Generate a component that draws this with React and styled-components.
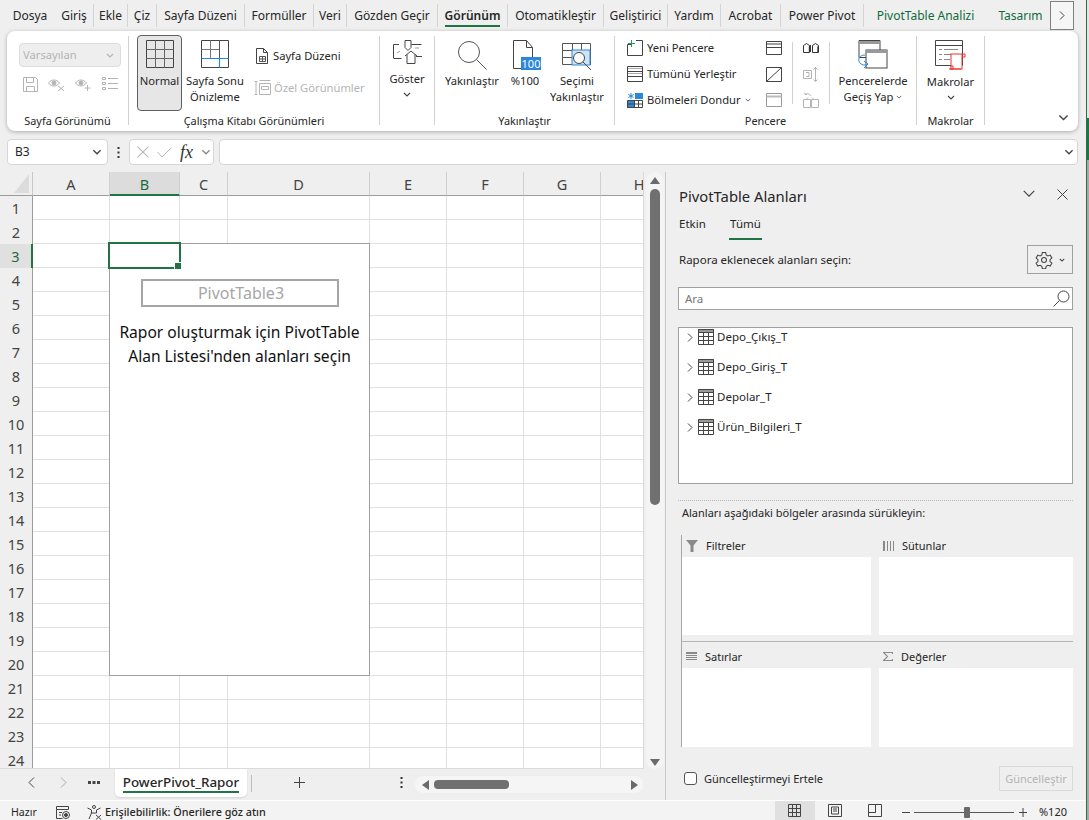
import React from 'react'
import styled, { createGlobalStyle } from 'styled-components'

const GlobalStyle = createGlobalStyle`
    html, body { margin: 0; padding: 0; background: #efefef; }
    * { box-sizing: border-box; }
    #root { width: 1089px; height: 820px; overflow: hidden; }
    svg { display: block; flex-shrink: 0; }
`

const GREEN = '#217346'
const DARK = '#444'
const MUTED = '#b4b4b4'

const Shell = styled.div`
    width: 1089px;
    height: 820px;
    display: flex;
    background: #efefef;
    color: #262626;
    font-family: "Noto Sans", "Open Sans", sans-serif;
    font-size: 12px;
    line-height: 16px;
    overflow: hidden;
`
const Content = styled.div`
    width: 1086px;
    display: flex;
    flex-direction: column;
`
const EdgeStrip = styled.div`
    width: 3px;
    border-left: 1px solid ${GREEN};
    background: linear-gradient(#e4e4e4 118px, ${GREEN} 118px, ${GREEN} 160px, #a9a9a9 160px);
`

/* ---- ust sekmeler ---- */
const TabBar = styled.div`
    height: 31px;
    padding: 4px 0 0 6px;
    display: flex;
    position: relative;
`
const Tab = styled.div`
    width: ${p => p.$w}px;
    height: 23px;
    flex-shrink: 0;
    display: flex;
    justify-content: center;
    line-height: 23px;
    white-space: nowrap;
    color: ${p => (p.$ctx ? '#0f6b3c' : '#262626')};
    font-weight: ${p => (p.$active ? 600 : 400)};
    border-right: 1px solid ${p => (p.$sep ? '#d4d4d4' : 'transparent')};
    & span {
        height: 23px;
        border-bottom: 2px solid ${p => (p.$active ? GREEN : 'transparent')};
    }
`
const TabMore = styled.div`
    position: absolute;
    left: 1050px;
    top: 1px;
    width: 24px;
    height: 29px;
    border: 1px solid #808080;
    background: #f6f6f6;
    display: flex;
    align-items: center;
    justify-content: center;
`

/* ---- serit ---- */
const Ribbon = styled.div`
    height: 100px;
    width: 1071px;
    margin-left: 7px;
    padding-top: 5px;
    background: #fff;
    border-radius: 8px;
    box-shadow: 0 1px 4px rgba(0, 0, 0, 0.28);
    display: flex;
    font-size: 11.2px;
`
const Group = styled.div`
    width: ${p => p.$w}px;
    height: 89px;
    flex-shrink: 0;
    border-right: 1px solid #d2d2d2;
    display: flex;
    flex-direction: column;
`
const GroupBody = styled.div`
    height: 75px;
    display: flex;
    padding-left: ${p => p.$pad || 0}px;
`
const GroupLabel = styled.div`
    height: 14px;
    line-height: 20px;
    font-size: 10.9px;
    text-align: center;
    white-space: nowrap;
`
const Collapse = styled.div`
    margin: 78px 0 0 auto;
    padding-right: 9px;
`
const LargeBtn = styled.div`
    width: ${p => p.$w}px;
    height: 76px;
    flex-shrink: 0;
    margin-top: -1px;
    margin-left: ${p => p.$ml || 0}px;
    padding-top: 4px;
    display: flex;
    flex-direction: column;
    align-items: center;
    text-align: center;
    white-space: nowrap;
    border-radius: 4px;
    background: ${p => (p.$on ? '#e6e6e6' : 'transparent')};
    border: 1px solid ${p => (p.$on ? '#606060' : 'transparent')};
`
const IconSlot = styled.div`
    height: ${p => p.$h || 33}px;
    padding-top: ${p => p.$top || 0}px;
    margin-top: ${p => p.$mt || 0}px;
    flex-shrink: 0;
`
const SmallCol = styled.div`
    width: ${p => p.$w}px;
    flex-shrink: 0;
    margin-left: ${p => p.$ml || 0}px;
    padding-top: ${p => p.$top || 0}px;
    display: flex;
    flex-direction: column;
    gap: ${p => p.$gap || 4.5}px;
`
const SmallBtn = styled.div`
    height: ${p => p.$h || 22}px;
    display: flex;
    align-items: center;
    gap: ${p => p.$gap || 4}px;
    white-space: nowrap;
    color: ${p => (p.$off ? MUTED : '#262626')};
`
const VSep = styled.div`
    width: 1px;
    height: 62px;
    margin: 6px 0 0 10px;
    background: #d2d2d2;
    flex-shrink: 0;
`
const ViewSelect = styled.div`
    width: 102px;
    height: 24px;
    margin-top: 7px;
    padding: 0 6px 0 3px;
    background: #eeeeee;
    border: 1px solid #dddddd;
    border-radius: 4px;
    color: ${MUTED};
    display: flex;
    align-items: center;
    justify-content: space-between;
`
const ViewIcons = styled.div`
    display: flex;
    gap: 10px;
    margin: 10px 0 0 4px;
`

/* ---- formul cubugu ---- */
const FormulaBar = styled.div`
    height: 26px;
    margin: 8px 8px 7px 7px;
    display: flex;
    flex-shrink: 0;
`
const FieldBox = styled.div`
    width: ${p => (p.$w ? `${p.$w}px` : 'auto')};
    flex: ${p => (p.$w ? '0 0 auto' : '1')};
    margin-left: ${p => p.$ml || 0}px;
    background: #fff;
    border: 1px solid #d6d6d6;
    border-radius: 4px;
    display: flex;
    align-items: center;
    justify-content: space-between;
    padding: ${p => p.$pad || '0 5px 0 7px'};
`
const Dots = styled.div`
    width: 21px;
    display: flex;
    align-items: center;
    justify-content: center;
`
const FxText = styled.span`
    font-family: "Liberation Serif", serif;
    font-style: italic;
    font-size: 18px;
    color: #333;
`

/* ---- ana alan ---- */
const Main = styled.div`
    height: 628px;
    display: flex;
    flex-shrink: 0;
`
const SheetSide = styled.div`
    width: 665px;
    flex-shrink: 0;
    display: flex;
    flex-direction: column;
`
const SheetTop = styled.div`
    height: 597px;
    display: flex;
    overflow: hidden;
`
const Sheet = styled.div`
    width: 644px;
    height: 597px;
    background: #fff;
    position: relative;
    overflow: hidden;
    flex-shrink: 0;
    display: grid;
    grid-template-columns: 33px 77px 70px 48px 142px 77px 77px 77px 77px;
    grid-auto-rows: 24px;
    border-bottom: 1px solid #dadada;
    border-right: 1px solid #dadada;
`
const Corner = styled.div`
    background: #efefef;
    border-right: 1px solid #c8c8c8;
    border-bottom: 1px solid #9c9c9c;
    position: relative;
    &::after {
        content: '';
        position: absolute;
        right: 3px;
        bottom: 2px;
        border-style: solid;
        border-width: 0 0 19px 15px;
        border-color: transparent transparent #dcdcdc transparent;
    }
`
const ColHead = styled.div`
    background: ${p => (p.$on ? '#dcdcdc' : '#efefef')};
    color: ${p => (p.$on ? '#1d6b41' : '#444')};
    border-right: 1px solid #d0d0d0;
    border-bottom: ${p => (p.$on ? `2px solid ${GREEN}` : '1px solid #9c9c9c')};
    font-size: 14.5px;
    text-align: center;
    line-height: 24px;
`
const RowHead = styled.div`
    background: ${p => (p.$on ? '#e0e0e0' : '#efefef')};
    color: ${p => (p.$on ? '#1d6b41' : '#444')};
    border-right: ${p => (p.$on ? `2px solid ${GREEN}` : '1px solid #9c9c9c')};
    font-size: 14.5px;
    text-align: center;
    line-height: 25px;
`
const Cell = styled.div`
    border-right: 1px solid #e1e1e1;
    border-bottom: 1px solid #e1e1e1;
`
const PivotBox = styled.div`
    position: absolute;
    left: 109px;
    top: 71px;
    width: 261px;
    height: 433px;
    background: #fff;
    border: 1px solid #a0a0a0;
    display: flex;
    flex-direction: column;
    align-items: center;
    padding-top: 35px;
`
const PivotTitle = styled.div`
    width: 198px;
    height: 28px;
    padding-left: 3px;
    border: 2px solid #a6a6a6;
    color: #a6a6a6;
    font-size: 16px;
    line-height: 24px;
    text-align: center;
`
const PivotText = styled.div`
    margin-top: 13px;
    color: #111;
    font-size: 15.6px;
    line-height: 24px;
    text-align: center;
    white-space: nowrap;
`
const Selection = styled.div`
    position: absolute;
    left: 108px;
    top: 70px;
    width: 73px;
    height: 27px;
    border: 2px solid ${GREEN};
    &::after {
        content: '';
        position: absolute;
        right: -3px;
        bottom: -3px;
        width: 6px;
        height: 6px;
        background: ${GREEN};
        border: 1px solid #fff;
    }
`
const VScroll = styled.div`
    width: 18px;
    margin: 0 0 0 2px;
    background: #f4f4f4;
    border-radius: 9px;
    display: flex;
    flex-direction: column;
    align-items: center;
    padding-top: 5px;
    padding-bottom: 3px;
    justify-content: space-between;
    flex-shrink: 0;
`
const VThumb = styled.div`
    width: 10px;
    height: 316px;
    margin-top: 5px;
    margin-bottom: auto;
    background: #707070;
    border-radius: 5px;
`
const SheetBar = styled.div`
    flex: 1;
    display: flex;
    align-items: flex-start;
    position: relative;
`
const NavBtn = styled.div`
    width: ${p => p.$w}px;
    margin-left: ${p => p.$ml || 0}px;
    height: 27px;
    flex-shrink: 0;
    display: flex;
    align-items: center;
    justify-content: center;
`
const SheetTab = styled.div`
    width: 132px;
    height: 28px;
    margin-left: ${p => p.$ml}px;
    flex-shrink: 0;
    background: #fff;
    border-radius: 0 0 5px 5px;
    box-shadow: 0 1px 2px rgba(0, 0, 0, 0.12);
    font-size: 13.4px;
    font-weight: 500;
    text-align: center;
    line-height: 26px;
    & span {
        display: inline-block;
        height: 24px;
        border-bottom: 2px solid ${GREEN};
    }
`
const TabSep = styled.div`
    width: 1px;
    height: 17px;
    margin: 6px 0 0 4px;
    background: #bdbdbd;
    flex-shrink: 0;
`
const HScroll = styled.div`
    width: 228px;
    height: 17px;
    margin: 7px 0 0 10px;
    flex-shrink: 0;
    background: #f5f5f5;
    border-radius: 8px;
    display: flex;
    align-items: center;
    padding: 0 5px 0 7px;
    gap: 5px;
`
const HThumb = styled.div`
    width: 75px;
    height: 9px;
    background: #707070;
    border-radius: 4px;
    margin-right: auto;
`

/* ---- pivot bolmesi ---- */
const Panel = styled.div`
    flex: 1;
    border-left: 1px solid #c8c8c8;
    padding: 0 14px 0 12px;
    display: flex;
    flex-direction: column;
    position: relative;
`
const PanelHead = styled.div`
    height: 45px;
    padding: 13px 0 0 1px;
    display: flex;
    justify-content: space-between;
`
const PanelTitle = styled.div`
    font-size: 14.8px;
    line-height: 22px;
`
const PanelActions = styled.div`
    display: flex;
    gap: 21px;
    padding: 4px 5px 0 0;
`
const PanelTabs = styled.div`
    display: flex;
    gap: 24px;
    padding-left: 1px;
    height: 23px;
    line-height: 14px;
    font-size: 11.5px;
`
const PanelTab = styled.div`
    height: 23px;
    width: ${p => p.$w}px;
    border-bottom: 2px solid ${p => (p.$on ? GREEN : 'transparent')};
    text-align: ${p => (p.$on ? 'center' : 'left')};
`
const ChooseRow = styled.div`
    height: 29px;
    margin-top: 5px;
    display: flex;
    justify-content: space-between;
    align-items: center;
    font-size: 11.5px;
    padding-left: 1px;
`
const GearBtn = styled.div`
    width: 46px;
    height: 29px;
    border: 1px solid #a0a0a0;
    display: flex;
    align-items: center;
    justify-content: center;
    gap: 6px;
`
const SearchBox = styled.div`
    height: 23px;
    margin-top: 13px;
    background: #fff;
    border: 1px solid #a0a0a0;
    padding: 0 2px 0 6px;
    display: flex;
    align-items: center;
    justify-content: space-between;
    color: #777;
    font-size: 11.5px;
`
const FieldList = styled.div`
    height: 157px;
    margin-top: 17px;
    background: #fff;
    border: 1px solid #a0a0a0;
    padding: 0 0 0 8px;
    display: flex;
    flex-direction: column;
`
const FieldRow = styled.div`
    height: 30px;
    flex-shrink: 0;
    margin-top: ${p => (p.$first ? '-6px' : '0')};
    display: flex;
    align-items: center;
    gap: 3px;
    font-size: 11.5px;
    & > svg:first-child { margin-right: 2px; }
`
const DotLine = styled.div`
    height: 1px;
    margin-top: 16px;
    border-top: 1px dotted #b8b8b8;
`
const DragHint = styled.div`
    margin: 0 0 0 4px;
    height: 24px;
    line-height: 24px;
    font-size: 11px;
`
const AreaGrid = styled.div`
    display: grid;
    grid-template-columns: 189px 194px;
    column-gap: 8px;
    margin: 10px 0 0 3px;
    border-left: 1px solid #a8a8a8;
    width: 392px;
`
const Area = styled.div`
    display: flex;
    flex-direction: column;
`
const AreaHead = styled.div`
    height: ${p => p.$h}px;
    display: flex;
    align-items: center;
    gap: 8px;
    padding-left: 4px;
    font-size: 11px;
`
const AreaBody = styled.div`
    height: ${p => p.$h}px;
    background: #fff;
`
const AreaDivider = styled.div`
    grid-column: 1 / 3;
    height: 1px;
    margin: 6px 0 3px;
    background: #b4b4b4;
`
const PanelFoot = styled.div`
    margin: 19px 0 0 6px;
    width: 389px;
    height: 25px;
    display: flex;
    align-items: center;
    font-size: 11px;
`
const Check = styled.div`
    width: 13px;
    height: 13px;
    border: 1px solid #555;
    border-radius: 3px;
    background: #fff;
    margin-right: 7px;
`
const UpdateBtn = styled.div`
    margin-left: auto;
    width: 74px;
    height: 25px;
    border: 1px solid #dadada;
    color: ${MUTED};
    font-size: 11px;
    line-height: 23px;
    text-align: center;
`

/* ---- durum cubugu ---- */
const StatusBar = styled.div`
    height: 20px;
    width: 1089px;
    flex-shrink: 0;
    background: #f3f3f3;
    border-top: 1px solid #fff;
    display: flex;
    align-items: center;
    font-size: 10.6px;
    padding: 3px 0 0 11px;
`
const StatusStrong = styled.span`
    font-weight: 500;
    font-size: 10.8px;
    margin-left: 4px;
    white-space: nowrap;
`
const StatusGap = styled.div`
    width: ${p => p.$w}px;
    flex-shrink: 0;
`
const StatusFill = styled.div`
    flex: 1;
`
const ViewBtn = styled.div`
    width: 40px;
    height: 19px;
    margin-top: -3px;
    display: flex;
    align-items: center;
    justify-content: center;
    background: ${p => (p.$on ? '#e0e0e0' : 'transparent')};
`
const ZoomPct = styled.span`
    margin: 0 22px 0 12px;
    font-size: 11px;
`
const ZoomTrack = styled.div`
    width: 100px;
    height: 1px;
    background: #555;
    margin: 0 5px 0 4px;
    position: relative;
    &::after {
        content: '';
        position: absolute;
        left: 50px;
        top: -5px;
        width: 6px;
        height: 11px;
        border-radius: 1px;
        background: #6a6a6a;
    }
`

/* ---- ikonlar ---- */
const Ico = ({ w, h, children, ...rest }) => (
    <svg width={w} height={h} viewBox={`0 0 ${w} ${h}`} fill="none" stroke={DARK} strokeWidth="1" {...rest}>{children}</svg>
)

const Chev = ({ w = 8, h = 5, c = DARK, sw = 1.1 }) => (
    <svg width={w} height={h} viewBox="0 0 8 5" fill="none" stroke={c} strokeWidth={sw}><path d="M1 1l3 3 3-3" /></svg>
)

const GridIcon = () => (
    <Ico w={28} h={28}>
        <path d="M.5.5h27v27H.5z" />
        <path d="M.5 9.5h27M.5 18.5h27M9.5.5v27M18.5.5v27" stroke="#666" />
    </Ico>
)
const BreakIcon = () => (
    <Ico w={28} h={28}>
        <path d="M.5.5h27v27H.5z" />
        <path d="M.5 9.5h18M9.5.5v18" stroke="#777" />
        <path d="M18.5.5v18" stroke="#555" />
        <path d="M.5 18.5h27M18.5 18.5v9" stroke="#1e8bd6" strokeWidth="1.2" />
    </Ico>
)
const PageIcon = () => (
    <Ico w={16} h={16}>
        <path d="M2.5.5h7l4 4v11h-11z" />
        <path d="M9.5.5v4h4" />
        <path d="M5.5 8.5h6v5h-6zM8.5 8.5v5M5.5 11h6" stroke="#555" />
    </Ico>
)
const CustomIcon = () => (
    <Ico w={18} h={16} stroke={MUTED}>
        <path d="M.5 1.5h3M2 1.5v13M.5 14.5h3M5.5 3.5h11v11h-11z" />
        <path d="M5.5.5h11M7.5 6.5h7v3h-7z" />
    </Ico>
)
const SaveIcon = () => (
    <Ico w={15} h={15} stroke={MUTED}>
        <path d="M.5.5h12l2 2v12H.5z" />
        <path d="M3.5.5v5h7v-5M3.5 14.5v-5h8v5" />
    </Ico>
)
const EyeIcon = ({ plus }) => (
    <Ico w={17} h={15} stroke={MUTED}>
        <path d="M.5 6c3-4 8-4 11 0-3 4-8 4-11 0z" />
        <circle cx="6" cy="6" r="2" fill={MUTED} />
        {plus
            ? <path d="M12.5 8v6M9.5 11h6" />
            : <path d="M10 9l6 5M16 9l-6 5" />}
    </Ico>
)
const ListIcon = () => (
    <Ico w={16} h={13} stroke={MUTED}>
        <path d="M.5.5h3v2h-3zM.5 5.5h3v2h-3zM.5 10.5h3v2h-3zM6 1.5h10M6 6.5h10M6 11.5h10" />
    </Ico>
)
const ShowIcon = () => (
    <Ico w={29} h={25}>
        <path d="M.5 18V4.5H6M12 .5h6v7l-3 3-3-3z" />
        <path d="M18.5 4.5h10M23 16.5h6" />
        <path d="M.5 18.5h8M12 16l6-5 6 5M14 14.5v9h8v-9" />
        <path d="M4 13l3-2M22 8l4 0" stroke="#999" />
    </Ico>
)
const ZoomIcon = () => (
    <Ico w={30} h={30} stroke="#555">
        <circle cx="12" cy="12" r="10.5" />
        <path d="M19.5 19.5l10 10" />
    </Ico>
)
const HundredIcon = () => (
    <svg width="32" height="30" viewBox="0 0 32 30">
        <path d="M4.5.5h13l6 7v21h-19z M17.5.5v7h6" fill="none" stroke="#444" />
        <rect x="12" y="17" width="20" height="13" fill="#2b88d8" />
        <text x="22" y="27.5" textAnchor="middle" fontFamily="Noto Sans, sans-serif" fontSize="11" fill="#fff">100</text>
    </svg>
)
const SelZoomIcon = () => (
    <svg width="30" height="27" viewBox="0 0 30 27" fill="none">
        <path d="M.5.5h28v21H.5zM.5 7.5h28M.5 14.5h10M10.5.5v21M19.5.5v7" stroke="#555" />
        <rect x="10" y="7" width="18" height="15" fill="#cfe3f5" stroke="#2b88d8" />
        <circle cx="17" cy="15" r="5.5" fill="#fff" stroke="#444" />
        <path d="M21 19l8 8" stroke="#444" />
    </svg>
)
const NewWinIcon = () => (
    <svg width="16" height="16" viewBox="0 0 16 16" fill="none">
        <path d="M.5 4.5v11h15V.5H9M.5 4.5H4" stroke="#444" />
        <path d="M4.5 0v7M1 3.5h7" stroke="#1f9d55" />
    </svg>
)
const ArrangeIcon = () => (
    <Ico w={16} h={16}>
        <path d="M.5.5h15v15H.5zM.5 5.5h15M.5 10.5h15" />
        <path d="M1 2.5h14M1 7.5h14" stroke="#aaa" />
    </Ico>
)
const FreezeIcon = () => (
    <svg width="16" height="15" viewBox="0 0 16 15" fill="none">
        <rect x="0" y="8" width="7" height="7" fill="#2b88d8" />
        <rect x="8" y="0" width="8" height="6" fill="#2b88d8" />
        <path d="M.5 7.5h15v7H.5zM7.5 7.5v7M11.5 7.5v7M.5 11h15" stroke="#444" />
        <path d="M4 0v6M1.3 1.5l5.4 3M6.7 1.5l-5.4 3" stroke="#2b88d8" />
    </svg>
)
const SplitIcon = ({ off }) => (
    <Ico w={16} h={14} stroke={off ? '#9a9a9a' : DARK}>
        <path d="M.5.5h15v13H.5z" />
        {off
            ? <path d="M.5 3.5h15" strokeWidth="2" stroke="#bbb" />
            : <path d="M.5 6.5h15M.5 3h15" />}
    </Ico>
)
const HideIcon = () => (
    <Ico w={16} h={15}>
        <path d="M.5.5h15v14H.5zM.5 14.5l15-14" />
    </Ico>
)
const SideIcon = () => (
    <Ico w={16} h={10} stroke="#333">
        <path d="M.5 2.5l3-2 3 2v7h-6zM9.5 2.5l3-2 3 2v7h-6zM7.5 2v7" />
        <path d="M6.5 3.5V9M15 3.5V9" strokeWidth="1.4" />
    </Ico>
)
const SyncIcon = () => (
    <Ico w={16} h={15} stroke={MUTED}>
        <path d="M.5 3.5h8v8h-8zM3 5.5h3v4H3M12.5 .5v14M10.5 2.5l2-2 2 2M10.5 12.5l2 2 2-2" />
    </Ico>
)
const ResetIcon = () => (
    <Ico w={16} h={16} stroke={MUTED}>
        <path d="M.5 7.5h7v8h-7zM8.5 7.5h7v8h-7zM3 7.5l2-2M11 7.5l-2-2M8 4C7 2 4 1 2 2.5M2 .5v2h2" />
    </Ico>
)
const SwitchIcon = () => (
    <svg width="30" height="29" viewBox="0 0 30 29" fill="none">
        <path d="M1 .5h21v17H1z" stroke="#444" />
        <rect x="1" y="1" width="21" height="3" fill="#999" />
        <rect x="8" y="10" width="21" height="18" fill="#fff" stroke="#444" />
        <rect x="8" y="10" width="21" height="3" fill="#999" />
        <path d="M7 15c-8 0-8 8-2 10h4M6 21l4 3-4 4" stroke="#2b88d8" />
    </svg>
)
const MacroIcon = () => (
    <svg width="31" height="30" viewBox="0 0 31 30" fill="none">
        <path d="M.5.5h27v25H.5zM.5 5.5h27" stroke="#444" />
        <path d="M4 9.5h3M9 9.5h14M4 14.5h3M9 14.5h8M4 19.5h3M9 19.5h6" stroke="#888" />
        <rect x="16" y="14" width="11" height="15" fill="#fff" stroke="#e33" />
        <path d="M27 14h3v3h-3M14 29h12M15 26h3v3h-3" stroke="#e33" />
    </svg>
)
const CrossIcon = ({ s = 11, c = DARK }) => (
    <svg width={s} height={s} viewBox="0 0 11 11" fill="none" stroke={c} strokeWidth="1"><path d="M.5.5l10 10M10.5.5l-10 10" /></svg>
)
const GearIcon = () => (
    <svg width="18" height="18" viewBox="0 0 24 24" fill="none" stroke="#444" strokeWidth="1.4">
        <circle cx="12" cy="12" r="3.3" />
        <path d="M9.8 2h4.4l.7 3.2 2.3 1.3 3.1-1 2.2 3.8-2.4 2.2v2.6l2.4 2.2-2.2 3.8-3.1-1-2.3 1.3-.7 3.2H9.8l-.7-3.2-2.3-1.3-3.1 1-2.2-3.8 2.4-2.2v-2.6L1.5 9.3l2.2-3.8 3.1 1 2.3-1.3z" />
    </svg>
)
const SearchIcon = () => (
    <Ico w={17} h={17}>
        <circle cx="10.5" cy="6.5" r="5.5" />
        <path d="M6.5 10.5l-6 6" />
    </Ico>
)
const TableIcon = () => (
    <svg width="16" height="16" viewBox="0 0 16 16" fill="none">
        <rect x="0" y="0" width="16" height="3" fill="#999" />
        <path d="M.5.5h15v15H.5zM.5 3.5h15M.5 7.5h15M.5 11.5h15M5.5 3.5v12M10.5 3.5v12" stroke="#444" strokeWidth="1" />
    </svg>
)
const RightChev = () => (
    <svg width="6" height="9" viewBox="0 0 6 9" fill="none" stroke="#444" strokeWidth="1"><path d="M1 .5l4 4-4 4" /></svg>
)
const FilterIcon = () => (
    <svg width="12" height="12" viewBox="0 0 12 12" fill="#8a8a8a"><path d="M0 0h12L7.5 5.5V12h-3V5.5z" /></svg>
)
const ColumnsIcon = () => (
    <svg width="11" height="10" viewBox="0 0 11 10" fill="none" stroke="#8a8a8a"><path d="M.5 0v10M1.5 0v10M4.5 0v10M7.5 0v10M10.5 0v10" /></svg>
)
const RowsIcon = () => (
    <svg width="11" height="9" viewBox="0 0 11 9" fill="none" stroke="#8a8a8a"><path d="M0 .5h11M0 1.5h11M0 3.5h11M0 5.5h11M0 7.5h11" /></svg>
)
const SumIcon = () => (
    <svg width="10" height="9" viewBox="0 0 10 9" fill="none" stroke="#8a8a8a" strokeWidth="1.1"><path d="M9.5 2V.5H.5l4 4-4 4h9V7" /></svg>
)
const TriArrow = ({ dir }) => {
    const d = { up: 'M5 0l5 7H0z', down: 'M0 0h10L5 7z', left: 'M7 0v10L0 5z', right: 'M0 0v10l7-5z' }[dir]
    const vertical = dir === 'up' || dir === 'down'
    return <svg width={vertical ? 10 : 7} height={vertical ? 7 : 10} viewBox={vertical ? '0 0 10 7' : '0 0 7 10'} fill="#6a6a6a"><path d={d} /></svg>
}
const VDots = () => (
    <svg width="3" height="11" viewBox="0 0 3 11" fill="#333"><rect width="2" height="2" x=".5" /><rect width="2" height="2" x=".5" y="4.5" /><rect width="2" height="2" x=".5" y="9" /></svg>
)
const MacroRecIcon = () => (
    <Ico w={14} h={13}>
        <path d="M.5.5h12v3H.5zM.5 3.5v9h6M3 6.5h3M3 9h2" />
        <circle cx="10" cy="9" r="3.5" />
        <circle cx="10" cy="9" r="1.5" fill="#444" />
    </Ico>
)
const AccessIcon = () => (
    <Ico w={14} h={15}>
        <circle cx="7" cy="2" r="1.5" />
        <path d="M.5 3l4 2v3l-2.5 6M13.5 3l-4 2v3M4.5 8h5" />
        <path d="M9 10l5 4.5M14 10l-5 4.5" />
    </Ico>
)
const PageViewIcon = () => (
    <Ico w={14} h={13}>
        <path d="M.5.5h13v12H.5zM3.5 3h7v7h-7zM5 5h4M5 7h4" />
    </Ico>
)
const BreakViewIcon = () => (
    <Ico w={14} h={13}>
        <path d="M.5.5h13v12H.5zM.5 8.5h7v-8M7.5 8.5v-3" />
    </Ico>
)
const GridViewIcon = () => (
    <Ico w={13} h={13}>
        <path d="M.5.5h12v12H.5zM.5 4.5h12M.5 8.5h12M4.5.5v12M8.5.5v12" />
    </Ico>
)

const TABS = [
    ['Dosya', 49], ['Giriş', 39, 1], ['Ekle', 34, 1], ['Çiz', 29, 1], ['Sayfa Düzeni', 88, 1],
    ['Formüller', 69, 1], ['Veri', 33, 1], ['Gözden Geçir', 91, 1], ['Görünüm', 70, 1, 'on'],
    ['Otomatikleştir', 96, 1], ['Geliştirici', 64, 1], ['Yardım', 53, 1], ['Acrobat', 60, 1],
    ['Power Pivot', 83, 1], ['PivotTable Analizi', 124, 0, 'ctx'], ['Tasarım', 66, 0, 'ctx'],
]
const COLS = ['A', 'B', 'C', 'D', 'E', 'F', 'G', 'H']
const ROWS = Array.from({ length: 24 }, (_, i) => i + 1)
const FIELDS = ['Depo_Çıkış_T', 'Depo_Giriş_T', 'Depolar_T', 'Ürün_Bilgileri_T']

function App() {
    return (
        <Shell>
            <GlobalStyle />
            <Content>
                <TabBar>
                    {TABS.map(([name, w, sep, kind]) => (
                        <Tab key={name} $w={w} $sep={sep} $active={kind === 'on'} $ctx={kind === 'ctx'}>
                            <span>{name}</span>
                        </Tab>
                    ))}
                    <TabMore><RightChev /></TabMore>
                </TabBar>

                <Ribbon>
                    <Group $w={122}>
                        <GroupBody $pad={12}>
                            <div>
                                <ViewSelect>Varsayılan<Chev c={MUTED} /></ViewSelect>
                                <ViewIcons>
                                    <SaveIcon />
                                    <EyeIcon />
                                    <EyeIcon plus />
                                    <ListIcon />
                                </ViewIcons>
                            </div>
                        </GroupBody>
                        <GroupLabel>Sayfa Görünümü</GroupLabel>
                    </Group>
                    <Group $w={251}>
                        <GroupBody $pad={8}>
                            <LargeBtn $w={45} $on><IconSlot><GridIcon /></IconSlot>Normal</LargeBtn>
                            <LargeBtn $w={58} $ml={4}><IconSlot><BreakIcon /></IconSlot>Sayfa Sonu<br />Önizleme</LargeBtn>
                            <SmallCol $w={125} $ml={10} $top={8} $gap={8}>
                                <SmallBtn $h={24} $gap={3}><PageIcon />Sayfa Düzeni</SmallBtn>
                                <SmallBtn $h={24} $gap={2} $off><CustomIcon />Özel Görünümler</SmallBtn>
                            </SmallCol>
                        </GroupBody>
                        <GroupLabel>Çalışma Kitabı Görünümleri</GroupLabel>
                    </Group>
                    <Group $w={55}>
                        <GroupBody>
                            <LargeBtn $w={54}>
                                <IconSlot $h={31}><ShowIcon /></IconSlot>
                                Göster
                                <IconSlot $h={10} $mt={5}><Chev /></IconSlot>
                            </LargeBtn>
                        </GroupBody>
                    </Group>
                    <Group $w={180}>
                        <GroupBody>
                            <LargeBtn $w={74}><IconSlot><ZoomIcon /></IconSlot>Yakınlaştır</LargeBtn>
                            <LargeBtn $w={32}><IconSlot><HundredIcon /></IconSlot>%100</LargeBtn>
                            <LargeBtn $w={72}><IconSlot $top={3}><SelZoomIcon /></IconSlot>Seçimi<br />Yakınlaştır</LargeBtn>
                        </GroupBody>
                        <GroupLabel>Yakınlaştır</GroupLabel>
                    </Group>
                    <Group $w={302}>
                        <GroupBody $pad={12}>
                            <SmallCol $w={139} $top={1}>
                                <SmallBtn><NewWinIcon />Yeni Pencere</SmallBtn>
                                <SmallBtn><ArrangeIcon />Tümünü Yerleştir</SmallBtn>
                                <SmallBtn><FreezeIcon />Bölmeleri Dondur<Chev w={6} h={4} /></SmallBtn>
                            </SmallCol>
                            <SmallCol $w={16} $top={1}>
                                <SmallBtn><SplitIcon /></SmallBtn>
                                <SmallBtn><HideIcon /></SmallBtn>
                                <SmallBtn><SplitIcon off /></SmallBtn>
                            </SmallCol>
                            <VSep />
                            <SmallCol $w={16} $ml={10} $top={1}>
                                <SmallBtn><SideIcon /></SmallBtn>
                                <SmallBtn><SyncIcon /></SmallBtn>
                                <SmallBtn><ResetIcon /></SmallBtn>
                            </SmallCol>
                            <VSep />
                            <LargeBtn $w={86}>
                                <IconSlot><SwitchIcon /></IconSlot>
                                Pencerelerde
                                <SmallBtn $h={16} $gap={3}>Geçiş Yap<Chev w={6} h={4} /></SmallBtn>
                            </LargeBtn>
                        </GroupBody>
                        <GroupLabel>Pencere</GroupLabel>
                    </Group>
                    <Group $w={68}>
                        <GroupBody>
                            <LargeBtn $w={67}>
                                <IconSlot $h={34}><MacroIcon /></IconSlot>
                                Makrolar
                                <IconSlot $h={10} $mt={5}><Chev /></IconSlot>
                            </LargeBtn>
                        </GroupBody>
                        <GroupLabel>Makrolar</GroupLabel>
                    </Group>
                    <Collapse><Chev w={11} h={7} sw={1} /></Collapse>
                </Ribbon>

                <FormulaBar>
                    <FieldBox $w={101}>B3<Chev w={10} h={6} /></FieldBox>
                    <Dots><VDots /></Dots>
                    <FieldBox $w={85} $pad="0 2px 0 7px">
                        <CrossIcon s={12} c="#b8b8b8" />
                        <svg width="15" height="11" viewBox="0 0 15 11" fill="none" stroke="#b8b8b8"><path d="M.5 5l4.5 5L14.5.5" /></svg>
                        <FxText>fx</FxText>
                        <Chev w={10} h={6} c="#888" />
                    </FieldBox>
                    <FieldBox $ml={5} $pad="0 3px 0 7px"><span /><Chev w={10} h={6} /></FieldBox>
                </FormulaBar>

                <Main>
                    <SheetSide>
                        <SheetTop>
                            <Sheet>
                                <Corner />
                                {COLS.map(c => <ColHead key={c} $on={c === 'B'}>{c}</ColHead>)}
                                {ROWS.map(r => (
                                    <React.Fragment key={r}>
                                        <RowHead $on={r === 3}>{r}</RowHead>
                                        {COLS.map(c => <Cell key={c} />)}
                                    </React.Fragment>
                                ))}
                                <PivotBox>
                                    <PivotTitle>PivotTable3</PivotTitle>
                                    <PivotText>Rapor oluşturmak için PivotTable<br />Alan Listesi'nden alanları seçin</PivotText>
                                </PivotBox>
                                <Selection />
                            </Sheet>
                            <VScroll>
                                <TriArrow dir="up" />
                                <VThumb />
                                <TriArrow dir="down" />
                            </VScroll>
                        </SheetTop>
                        <SheetBar>
                            <NavBtn $w={15} />
                            <NavBtn $w={32}><svg width="7" height="11" viewBox="0 0 7 11" fill="none" stroke="#444"><path d="M6 .5l-5 5 5 5" /></svg></NavBtn>
                            <NavBtn $w={32}><svg width="7" height="11" viewBox="0 0 7 11" fill="none" stroke="#aaa"><path d="M1 .5l5 5-5 5" /></svg></NavBtn>
                            <NavBtn $w={30}>
                                <svg width="12" height="3" viewBox="0 0 12 3" fill="#444"><rect width="3" height="3" /><rect x="4.5" width="3" height="3" /><rect x="9" width="3" height="3" /></svg>
                            </NavBtn>
                            <SheetTab $ml={6}><span>PowerPivot_Rapor</span></SheetTab>
                            <TabSep />
                            <NavBtn $w={95}>
                                <svg width="11" height="11" viewBox="0 0 11 11" stroke="#444"><path d="M5.5 0v11M0 5.5h11" /></svg>
                            </NavBtn>
                            <NavBtn $w={8} $ml={50}><VDots /></NavBtn>
                            <HScroll>
                                <TriArrow dir="left" />
                                <HThumb />
                                <TriArrow dir="right" />
                            </HScroll>
                        </SheetBar>
                    </SheetSide>

                    <Panel>
                        <PanelHead>
                            <PanelTitle>PivotTable Alanları</PanelTitle>
                            <PanelActions>
                                <Chev w={14} h={9} sw={0.7} />
                                <CrossIcon s={11} />
                            </PanelActions>
                        </PanelHead>
                        <PanelTabs>
                            <PanelTab $w={26}>Etkin</PanelTab>
                            <PanelTab $w={33} $on>Tümü</PanelTab>
                        </PanelTabs>
                        <ChooseRow>
                            Rapora eklenecek alanları seçin:
                            <GearBtn><GearIcon /><Chev w={6} h={4} sw={1.4} /></GearBtn>
                        </ChooseRow>
                        <SearchBox>Ara<SearchIcon /></SearchBox>
                        <FieldList>
                            {FIELDS.map((f, i) => (
                                <FieldRow key={f} $first={i === 0}>
                                    <RightChev />
                                    <TableIcon />
                                    {f}
                                </FieldRow>
                            ))}
                        </FieldList>
                        <DotLine />
                        <DragHint>Alanları aşağıdaki bölgeler arasında sürükleyin:</DragHint>
                        <AreaGrid>
                            <Area>
                                <AreaHead $h={22}><FilterIcon />Filtreler</AreaHead>
                                <AreaBody $h={78} />
                            </Area>
                            <Area>
                                <AreaHead $h={22}><ColumnsIcon />Sütunlar</AreaHead>
                                <AreaBody $h={78} />
                            </Area>
                            <AreaDivider />
                            <Area>
                                <AreaHead $h={23}><RowsIcon />Satırlar</AreaHead>
                                <AreaBody $h={79} />
                            </Area>
                            <Area>
                                <AreaHead $h={23}><SumIcon />Değerler</AreaHead>
                                <AreaBody $h={79} />
                            </Area>
                        </AreaGrid>
                        <PanelFoot>
                            <Check />
                            Güncelleştirmeyi Ertele
                            <UpdateBtn>Güncelleştir</UpdateBtn>
                        </PanelFoot>
                    </Panel>
                </Main>

                <StatusBar>
                    <span>Hazır</span>
                    <StatusGap $w={19} />
                    <MacroRecIcon />
                    <StatusGap $w={17} />
                    <AccessIcon />
                    <StatusStrong>Erişilebilirlik: Önerilere göz atın</StatusStrong>
                    <StatusFill />
                    <ViewBtn $on><GridViewIcon /></ViewBtn>
                    <ViewBtn><PageViewIcon /></ViewBtn>
                    <ViewBtn><BreakViewIcon /></ViewBtn>
                    <StatusGap $w={7} />
                    <svg width="8" height="1" viewBox="0 0 8 1" stroke="#444"><path d="M0 .5h8" /></svg>
                    <ZoomTrack />
                    <svg width="8" height="9" viewBox="0 0 8 9" stroke="#444"><path d="M4 0v9M0 4.5h8" /></svg>
                    <ZoomPct>%120</ZoomPct>
                </StatusBar>
            </Content>
            <EdgeStrip />
        </Shell>
    )
}

export default App
